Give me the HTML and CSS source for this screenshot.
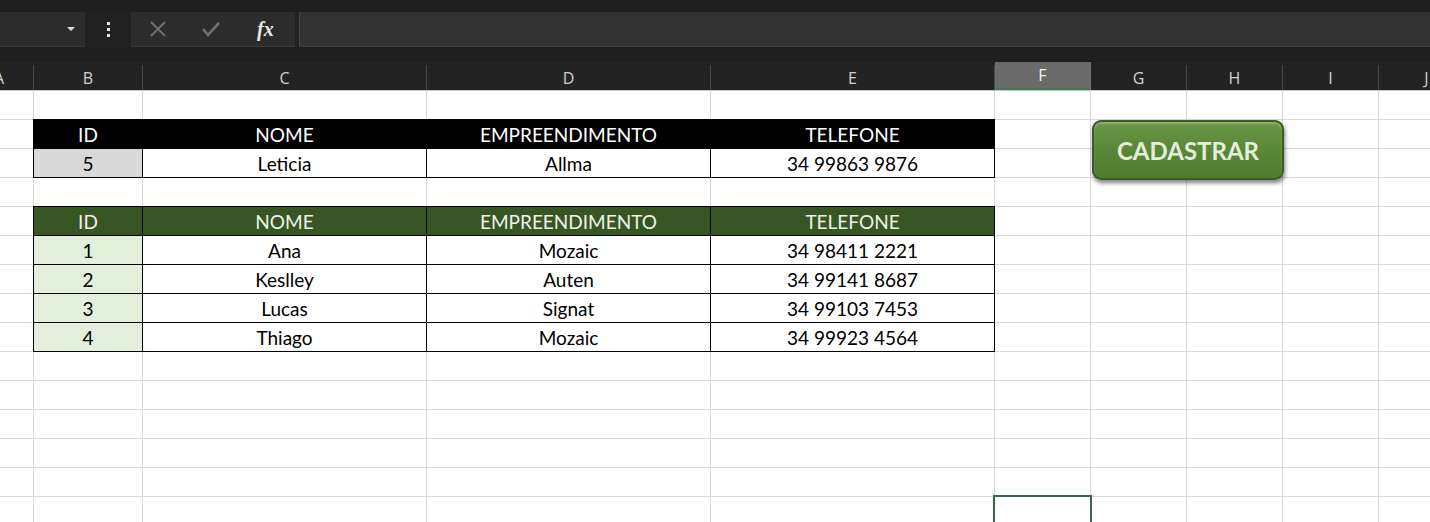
FILE: index.html
```html
<!DOCTYPE html>
<html lang="pt">
<head>
    <meta charset="UTF-8">
    <title>Cadastro</title>
    <link rel="stylesheet" href="styles.css">
</head>
<body>
    <div class="formula-bar">
        <div class="name-box"><span class="arrow"></span></div>
        <div class="dots"><i></i><i></i><i></i></div>
        <div class="fx-buttons">
            <svg width="18" height="18" viewBox="0 0 18 18"><path d="M2 2 L16 16 M16 2 L2 16" stroke="#6f6f6f" stroke-width="2" fill="none"/></svg>
            <svg width="20" height="18" viewBox="0 0 20 18"><path d="M2 9 L7 15 L18 3" stroke="#6f6f6f" stroke-width="2.6" fill="none"/></svg>
            <span class="fx">fx</span>
        </div>
        <div class="formula-input"></div>
    </div>

    <div class="col-headers">
        <div class="ch">A</div>
        <div class="ch">B</div>
        <div class="ch">C</div>
        <div class="ch">D</div>
        <div class="ch">E</div>
        <div class="ch active">F</div>
        <div class="ch">G</div>
        <div class="ch">H</div>
        <div class="ch">I</div>
        <div class="ch">J</div>
    </div>

    <div class="sheet">
        <div class="col c1"></div>
        <div class="col c2"></div>
        <div class="col c3"></div>
        <div class="col c4"></div>
        <div class="col c5"></div>
        <div class="col c6"></div>
        <div class="col c7"></div>
        <div class="col c8"></div>
        <div class="col c9"></div>
        <div class="col c10"></div>

        <!-- registro atual -->
        <div class="tbl tbl-form">
            <div class="cell head">ID</div>
            <div class="cell head">NOME</div>
            <div class="cell head">EMPREENDIMENTO</div>
            <div class="cell head">TELEFONE</div>
            <div class="cell id">5</div>
            <div class="cell">Leticia</div>
            <div class="cell">Allma</div>
            <div class="cell">34 99863 9876</div>
        </div>

        <button class="btn-cadastrar">CADASTRAR</button>

        <!-- base de dados -->
        <div class="tbl tbl-list">
            <div class="cell head">ID</div>
            <div class="cell head">NOME</div>
            <div class="cell head">EMPREENDIMENTO</div>
            <div class="cell head">TELEFONE</div>
            <div class="cell id">1</div>
            <div class="cell">Ana</div>
            <div class="cell">Mozaic</div>
            <div class="cell">34 98411 2221</div>
            <div class="cell id">2</div>
            <div class="cell">Keslley</div>
            <div class="cell">Auten</div>
            <div class="cell">34 99141 8687</div>
            <div class="cell id">3</div>
            <div class="cell">Lucas</div>
            <div class="cell">Signat</div>
            <div class="cell">34 99103 7453</div>
            <div class="cell id">4</div>
            <div class="cell">Thiago</div>
            <div class="cell">Mozaic</div>
            <div class="cell">34 99923 4564</div>
        </div>

        <div class="selected"></div>
    </div>
</body>
</html>
```

FILE: styles.css
```css
body {
    margin: 0;
    height: 522px;
    overflow: hidden;
    background-color: #1f1f1f;
    font-family: Lato, "Open Sans", sans-serif;
}

.formula-bar {
    display: flex;
    height: 35px;
    margin-top: 12px;
    background-color: #222222;
}

.name-box {
    width: 85px;
    background-color: #2c2c2c;
    border-bottom: 1px solid #3a3a3a;
    box-sizing: border-box;
    display: flex;
    align-items: center;
    justify-content: flex-end;
    padding-right: 10px;
}

.arrow {
    width: 0;
    height: 0;
    border-left: 4px solid transparent;
    border-right: 4px solid transparent;
    border-top: 4px solid #e0e0e0;
}

.dots {
    width: 46px;
    display: flex;
    flex-direction: column;
    align-items: center;
    justify-content: center;
    gap: 3px;
}

    .dots i {
        width: 3px;
        height: 3px;
        background-color: #e6e6e6;
    }

.fx-buttons {
    width: 164px;
    background-color: #2c2c2c;
    border-bottom: 1px solid #3a3a3a;
    box-sizing: border-box;
    display: flex;
    align-items: center;
    gap: 34px;
    padding-left: 18px;
}

.fx {
    font-family: "Liberation Serif", serif;
    font-style: italic;
    font-weight: bold;
    font-size: 20px;
    color: #e8e8e8;
    margin-left: 2px;
}

.formula-input {
    flex: 1;
    margin-left: 4px;
    background-color: #333333;
    border-left: 1px solid #484848;
    border-bottom: 1px solid #3e3e3e;
}

.col-headers {
    display: grid;
    grid-template-columns: 34px 109px 284px 284px 284px 96px 96px 96px 96px 96px;
    height: 28px;
    margin-top: 15px;
    background-color: #232323;
    border-bottom: 1px solid #c6c6c6;
}

.ch {
    display: flex;
    align-items: center;
    justify-content: center;
    color: #d2d2d2;
    font-family: "Open Sans", sans-serif;
    font-size: 16px;
    border-right: 1px solid #4a4a4a;
    margin-top: 3px;
}

    .ch:first-child {
        justify-content: flex-start;
        margin-left: -6px;
    }

    .ch.active {
        margin-top: 0;
        background-color: #6a6a6a;
        color: #f4f4f4;
        border-bottom: 2px solid #3b7a55;
        border-right-color: #7a7a7a;
    }

.sheet {
    display: grid;
    grid-template-columns: 34px 109px 284px 284px 284px 96px 96px 96px 96px 96px;
    grid-template-rows: repeat(15, 29px);
    background-color: #ffffff;
    background-image: repeating-linear-gradient(to bottom, transparent 0, transparent 28px, #d9d9d9 28px, #d9d9d9 29px);
}

.col {
    grid-row: 1 / -1;
    border-right: 1px solid #d9d9d9;
}

.c1 { grid-column: 1; }
.c2 { grid-column: 2; }
.c3 { grid-column: 3; }
.c4 { grid-column: 4; }
.c5 { grid-column: 5; }
.c6 { grid-column: 6; }
.c7 { grid-column: 7; }
.c8 { grid-column: 8; }
.c9 { grid-column: 9; }
.c10 { grid-column: 10; }

.tbl {
    grid-column: 2 / 6;
    align-self: start;
    display: grid;
    grid-template-columns: 109px 284px 284px 284px;
    grid-auto-rows: 29px;
    margin: -1px 0 0 -1px;
    border-left: 1px solid #000;
    border-top: 1px solid #000;
    background-color: #ffffff;
}

.tbl-form {
    grid-row: 2 / 4;
}

.tbl-list {
    grid-row: 5 / 10;
}

.cell {
    display: flex;
    align-items: center;
    justify-content: center;
    box-sizing: border-box;
    border-right: 1px solid #000;
    border-bottom: 1px solid #000;
    font-size: 19px;
    color: #000;
}

.tbl-form .head {
    background-color: #000000;
    color: #ffffff;
}

.tbl-form .id {
    background-color: #d9d9d9;
}

.tbl-list .head {
    background-color: #375623;
    color: #eef3e8;
}

.tbl-list .id {
    background-color: #e2efda;
}

.btn-cadastrar {
    grid-column: 7 / 9;
    grid-row: 2 / 4;
    align-self: start;
    justify-self: start;
    width: 192px;
    height: 60px;
    margin-left: 1px;
    border: 2px solid #3a5a26;
    border-radius: 9px;
    background: linear-gradient(to bottom, #6b9648 0%, #5b8839 45%, #4f7b30 100%);
    box-shadow: 1px 3px 4px rgba(0,0,0,0.5), inset 0 2px 2px rgba(255,255,255,0.25);
    color: #e4efda;
    font-family: Lato, sans-serif;
    font-weight: bold;
    font-size: 24px;
    cursor: pointer;
    padding: 0;
}

.selected {
    grid-column: 6;
    grid-row: 15;
    margin: -2px -1px 0 -2px;
    border: 2px solid #2f6b47;
    border-bottom: none;
}
```
